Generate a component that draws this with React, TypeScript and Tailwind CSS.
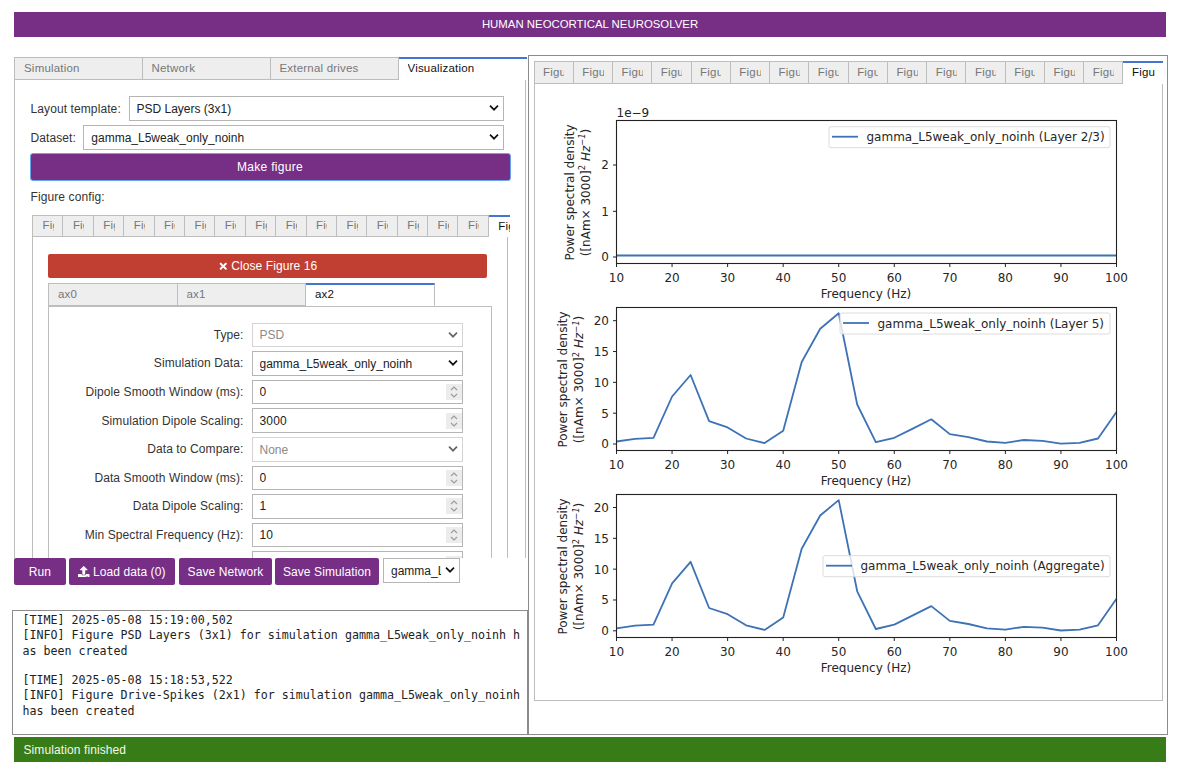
import React from "react";
import { FaTimes, FaUpload } from "react-icons/fa";

const ui = "font-['Liberation_Sans',Arial,sans-serif]";

function Chevron({ dim }: { dim?: boolean }) {
  return (
    <svg width="10" height="7" viewBox="0 0 10 7" className="pointer-events-none absolute right-[5px] top-1/2 -translate-y-1/2">
      <path d="M1 1.2 L5 5.2 L9 1.2" fill="none" stroke={dim ? "#666" : "#111"} strokeWidth="1.7" />
    </svg>
  );
}

function Select({ value, dim, className = "", pr = "pr-6" }: { value: string; dim?: boolean; className?: string; pr?: string }) {
  return (
    <div className={`relative h-[24.6px] ${className}`}>
      <select
        disabled={dim}
        defaultValue={value}
        className={`block h-full w-full appearance-none rounded-none border bg-white pl-[7px] pt-[1px] ${pr} text-[12px] outline-none ${dim ? "border-[#d4d4d4] text-[#8a8a8a] opacity-100" : "border-[#b5b5b5] text-[#222]"}`}
      >
        <option>{value}</option>
      </select>
      <Chevron dim={dim} />
    </div>
  );
}

function Spin() {
  return (
    <svg width="16" height="16" viewBox="0 0 16 16" className="pointer-events-none absolute right-[1px] top-1/2 -translate-y-1/2 bg-[#ececec]">
      <path d="M5 6 L8 3 L11 6 M5 10 L8 13 L11 10" fill="none" stroke="#9a9a9a" strokeWidth="1.1" />
    </svg>
  );
}

function NumberField({ value }: { value: string }) {
  return (
    <div className="relative h-[24.6px] w-full">
      <input
        readOnly
        defaultValue={value}
        className="block h-full w-full rounded-none border border-[#b5b5b5] bg-white pl-[7px] text-[12px] tracking-[0.2px] text-[#222] outline-none"
      />
      <Spin />
    </div>
  );
}

function Row({ label, children }: { label: string; children: React.ReactNode }) {
  return (
    <div className="flex h-[24.6px] items-center">
      <div className="w-[195px] whitespace-nowrap pr-[8px] text-right text-[12px] tracking-[0.1px] text-[#333]">{label}</div>
      <div className="w-[211px]">{children}</div>
    </div>
  );
}

function Tab({ label, active, className = "", px = "px-[9px]", text = "text-[11.5px]" }: { label: string; active?: boolean; className?: string; px?: string; text?: string }) {
  return (
    <div
      className={`flex shrink-0 items-center border-r border-b border-[#bdbdbd] ${px} ${text} tracking-[0.2px] ${active ? "border-t-2 border-t-[#4375d1] border-b-white bg-white text-[#111]" : "border-t bg-[#eeeeee] text-[#777]"} ${className}`}
    >
      <span className="block w-full overflow-hidden whitespace-nowrap">{label}</span>
    </div>
  );
}

const data = [0.4, 0.85, 1.0, 7.7, 11.2, 3.7, 2.7, 0.9, 0.15, 2.15, 13.3, 18.7, 21.2, 6.4, 0.3, 1.0, 2.5, 4.0, 1.6, 1.1, 0.4, 0.2, 0.65, 0.5, 0.05, 0.2, 0.9, 5.2];

type ChartProps = {
  flat?: boolean;
  legend: string;
  legendX: number;
  legendY: number;
  labelX: number;
  zero: number;
};

function Chart({ flat, legend, legendX, legendY, labelX, zero }: ChartProps) {
  const L = 81.5;
  const R = 581.5;
  const T = 23.5;
  const B = 166.5;
  const px = (f: number) => L + ((f - 10) * (R - L)) / 90;
  const py = (v: number) => zero - v * 6.165;
  const pts = data.map((v, i) => `${px(10 + (i * 90) / 27).toFixed(1)},${py(v).toFixed(1)}`).join(" ");
  const yt = flat
    ? [
        { y: 160, t: "0" },
        { y: 114.3, t: "1" },
        { y: 68, t: "2" },
      ]
    : [0, 5, 10, 15, 20].map((v) => ({ y: py(v), t: String(v) }));
  const xt = [10, 20, 30, 40, 50, 60, 70, 80, 90, 100];
  const midY = 95.5;
  return (
    <svg width="627" height="187" viewBox="0 0 627 187" className="block overflow-visible" fontFamily="'DejaVu Sans',sans-serif" fill="#262626">
      {flat ? (
        <line x1={L} x2={R} y1={158.5} y2={158.5} stroke="#3d72b6" strokeWidth="1.8" />
      ) : (
        <polyline points={pts} fill="none" stroke="#3d72b6" strokeWidth="1.8" strokeLinejoin="round" />
      )}
      <rect x={L} y={T} width={R - L} height={B - T} fill="none" stroke="#222" strokeWidth="1.1" />
      {xt.map((f) => (
        <g key={f}>
          <line x1={px(f)} x2={px(f)} y1={B} y2={B + 3.5} stroke="#222" />
          <text x={px(f)} y={B + 18.5} textAnchor="middle" fontSize="12">{f}</text>
        </g>
      ))}
      {yt.map((t) => (
        <g key={t.t}>
          <line x1={L - 3.5} x2={L} y1={t.y} y2={t.y} stroke="#222" />
          <text x={L - 7.5} y={t.y + 4.4} textAnchor="end" fontSize="12">{t.t}</text>
        </g>
      ))}
      {flat && <text x={L} y={19.5} fontSize="12">1e−9</text>}
      <text x={(L + R) / 2 - 0.5} y={B + 34} textAnchor="middle" fontSize="12">Frequency (Hz)</text>
      <g transform={`translate(${labelX} ${midY}) rotate(-90)`} fontSize="12" textAnchor="middle">
        <text x="0" y="0">Power spectral density</text>
        <text x="0" y="16">
          ([nAm× 3000]<tspan dy="-4.5" fontSize="8.4">2</tspan>
          <tspan dy="4.5" fontStyle="italic"> Hz</tspan>
          <tspan dy="-4.5" fontSize="8.4" fontStyle="italic">−1</tspan>
          <tspan dy="4.5">)</tspan>
        </text>
      </g>
      <rect x={legendX} y={legendY} width={575 - legendX} height="21" rx="2" fill="#fff" fillOpacity="0.8" stroke="#dcdcdc" />
      <line x1={legendX + 3} x2={legendX + 29} y1={legendY + 10} y2={legendY + 10} stroke="#3d72b6" strokeWidth="1.8" />
      <text x={legendX + 37.5} y={legendY + 14.5} fontSize="12">{legend}</text>
    </svg>
  );
}

const bottomBtn = "flex h-[27px] items-center justify-center rounded-[2px] bg-[#772f86] text-[12px] tracking-[0.1px] text-white";

export default function App() {
  return (
    <div className={`${ui} h-[772px] w-[1183px] overflow-hidden bg-white pl-[14px] pt-[12px]`}>
      <div className="flex h-[25px] w-[1152px] items-center justify-center bg-[#772f86] text-[11.4px] text-white">
        HUMAN NEOCORTICAL NEUROSOLVER
      </div>

      <div className="mt-[18px] flex h-[680px] w-[1154px] items-stretch">
        <div className="flex w-[514px] shrink-0 flex-col pt-[2px]">
          <div className="h-[501px] w-[513px] overflow-hidden">
            <div className="flex h-[23px] border-l border-[#bdbdbd]">
              <Tab label="Simulation" className="w-[127.5px]" />
              <Tab label="Network" className="w-[128px]" />
              <Tab label="External drives" className="w-[128px]" />
              <Tab label="Visualization" active className="w-[129px] border-r-0" />
            </div>
            <div className="h-[478px] w-[512px] overflow-hidden border-x border-[#bdbdbd] pl-[15.5px] pt-[16px]">
              <div className="flex h-[24.6px] w-[473.5px] items-center">
                <span className="w-[98px] whitespace-nowrap pt-[1px] text-[12px] tracking-[0.1px] text-[#333]">Layout template:</span>
                <Select value="PSD Layers (3x1)" className="w-[375.5px]" />
              </div>
              <div className="mt-[4.6px] flex h-[24.6px] w-[473.5px] items-center">
                <span className="w-[52.8px] whitespace-nowrap pt-[1px] text-[12px] tracking-[0.1px] text-[#333]">Dataset:</span>
                <Select value="gamma_L5weak_only_noinh" className="w-[420.7px]" />
              </div>
              <button className="mt-[3px] -ml-[1px] block h-[28px] w-[481px] rounded-[3px] border border-[#69a5e8] bg-[#772f86] text-[12px] tracking-[0.3px] text-white">
                Make figure
              </button>
              <div className="mt-[9px] text-[12px] leading-[14px] tracking-[0.1px] text-[#333]">Figure config:</div>
              <div className="mt-[11px] ml-[1.5px] w-[478px]">
                <div className="flex h-[22.5px] w-[478px] overflow-hidden border-l border-[#bdbdbd]">
                  {Array.from({ length: 15 }, (_, i) => (
                    <Tab key={i} label={`Figure ${i + 1}`} px="pl-[9.5px] pr-[8.5px]" className="w-[30.4px]" />
                  ))}
                  <Tab label="Figure 16" active px="pl-[9.5px] pr-0" className="w-[21px] border-r-0" />
                </div>
                <div className="w-[476px] border-x border-[#bdbdbd] pl-[15px] pt-[16.5px]">
                  <button className="flex h-[24.7px] w-[439px] items-center justify-center gap-[3px] rounded-[2px] bg-[#c13f32] text-[12px] tracking-[0.1px] text-white">
                    <FaTimes className="text-[10.5px]" />
                    Close Figure 16
                  </button>
                  <div className="mt-[4.6px] flex h-[23px] w-[386px] border-l border-[#bdbdbd]">
                    <Tab label="ax0" className="w-[128.5px]" />
                    <Tab label="ax1" className="w-[128.5px]" />
                    <Tab label="ax2" active className="w-[129px]" />
                  </div>
                  <div className="w-[444px] border-x border-t border-[#bdbdbd] pl-[7.5px] pt-[15.5px]">
                    <div className="flex flex-col gap-[4px]">
                      <Row label="Type:"><Select value="PSD" dim className="w-full" /></Row>
                      <Row label="Simulation Data:"><Select value="gamma_L5weak_only_noinh" className="w-full" /></Row>
                      <Row label="Dipole Smooth Window (ms):"><NumberField value="0" /></Row>
                      <Row label="Simulation Dipole Scaling:"><NumberField value="3000" /></Row>
                      <Row label="Data to Compare:"><Select value="None" dim className="w-full" /></Row>
                      <Row label="Data Smooth Window (ms):"><NumberField value="0" /></Row>
                      <Row label="Data Dipole Scaling:"><NumberField value="1" /></Row>
                      <Row label="Min Spectral Frequency (Hz):"><NumberField value="10" /></Row>
                      <Row label=""><NumberField value="" /></Row>
                    </div>
                  </div>
                </div>
              </div>
            </div>
          </div>

          <div className="flex h-[27px] items-start">
            <button className={`${bottomBtn} w-[52px]`}>Run</button>
            <button className={`${bottomBtn} ml-[3px] w-[106px] gap-[3px]`}>
              <FaUpload className="text-[11.5px]" />
              Load data (0)
            </button>
            <button className={`${bottomBtn} ml-[4px] w-[93px]`}>Save Network</button>
            <button className={`${bottomBtn} ml-[3px] w-[104px]`}>Save Simulation</button>
            <Select value="gamma_L5weak_only_noinh" pr="pr-[18px]" className="ml-[4px] w-[77px]" />
          </div>

          <div className="-ml-[2px] mt-[25px] h-[125px] w-[516px] border border-[#8c8c8c] pl-[9.5px] pr-[6px] pt-[2px] font-['DejaVu_Sans_Mono',monospace] text-[11.65px] leading-[15.3px] text-[#222]">
            <div className="whitespace-pre">[TIME] 2025-05-08 15:19:00,502</div>
            <div className="whitespace-pre">[INFO] Figure PSD Layers (3x1) for simulation gamma_L5weak_only_noinh h</div>
            <div className="whitespace-pre">as been created</div>
            <div className="h-[14.3px]" />
            <div className="whitespace-pre">[TIME] 2025-05-08 15:18:53,522</div>
            <div className="whitespace-pre">[INFO] Figure Drive-Spikes (2x1) for simulation gamma_L5weak_only_noinh</div>
            <div className="whitespace-pre">has been created</div>
          </div>
        </div>

        <div className="w-[640px] shrink-0 border border-[#8c8c8c] pl-[4.5px] pr-[4px] pt-[5px]">
          <div className="flex h-[22.5px] w-[629px] border-l border-[#bdbdbd]">
            {Array.from({ length: 15 }, (_, i) => (
              <Tab key={i} label={`Figure ${i + 1}`} px="px-[8.5px]" className="w-[39.27px]" />
            ))}
            <Tab label="Figure 16" active px="px-[8.5px]" className="w-[40px] border-r-0" />
          </div>
          <div className="h-[617.5px] w-[629px] border-x border-b border-[#bdbdbd] pt-[13.5px]">
            <Chart flat legend="gamma_L5weak_only_noinh (Layer 2/3)" legendX={294} legendY={29.7} labelX={38.5} zero={160} />
            <Chart legend="gamma_L5weak_only_noinh (Layer 5)" legendX={305} legendY={29} labelX={32} zero={160} />
            <Chart legend="gamma_L5weak_only_noinh (Aggregate)" legendX={288} legendY={84.7} labelX={32} zero={159.8} />
          </div>
        </div>
      </div>

      <div className="mt-[2px] flex h-[25px] w-[1152px] items-center bg-[#387c17] pl-[9.5px] text-[12px] tracking-[0.1px] text-[#f3f7f0]">
        Simulation finished
      </div>
    </div>
  );
}
